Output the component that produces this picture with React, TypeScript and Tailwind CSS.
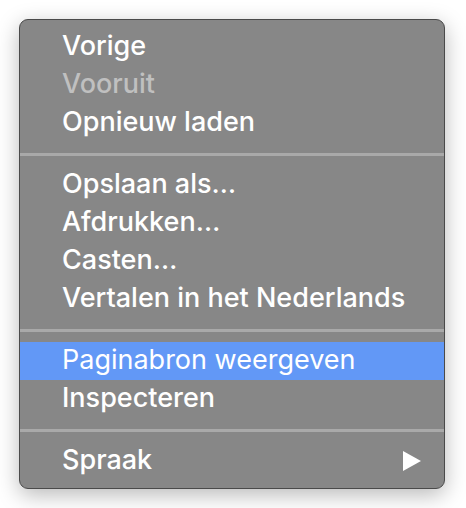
const groups: { label: string; disabled?: boolean; active?: boolean; submenu?: boolean }[][] = [
  [{ label: 'Vorige' }, { label: 'Vooruit', disabled: true }, { label: 'Opnieuw laden' }],
  [
    { label: 'Opslaan als…' },
    { label: 'Afdrukken…' },
    { label: 'Casten…' },
    { label: 'Vertalen in het Nederlands' },
  ],
  [{ label: 'Paginabron weergeven', active: true }, { label: 'Inspecteren' }],
  [{ label: 'Spraak', submenu: true }],
]

export default function App() {
  return (
    <div className="w-[466px] h-[508px] bg-white pt-[19px] pl-[19px]">
      <div
        className="w-[426px] h-[470px] rounded-[9px] border border-[#4a4a4a] bg-[#878787] py-2 shadow-[0_6px_22px_rgba(0,0,0,0.28)] overflow-hidden"
        style={{ fontFamily: 'Inter, "Noto Sans", sans-serif' }}
      >
        {groups.map((group, gi) => (
          <div key={gi}>
            {gi > 0 && (
              <div className="h-6 flex items-center">
                <div className="h-[3px] w-full bg-[#a9a9a9]" />
              </div>
            )}
            {group.map((item) => (
              <div
                key={item.label}
                className={`h-[38px] flex items-center justify-between pl-[42px] pr-[23px] text-[27px] leading-none ${
                  item.active ? 'bg-[#6298f6] font-normal' : 'font-medium'
                } ${item.disabled ? 'text-[#c0c0c0]' : 'text-white'}`}
              >
                <span className="-mt-[3px]">{item.label}</span>
                {item.submenu && (
                  <svg width="18" height="20" viewBox="0 0 18 20">
                    <path d="M0 0 L18 10 L0 20 Z" fill="white" />
                  </svg>
                )}
              </div>
            ))}
          </div>
        ))}
      </div>
    </div>
  )
}
